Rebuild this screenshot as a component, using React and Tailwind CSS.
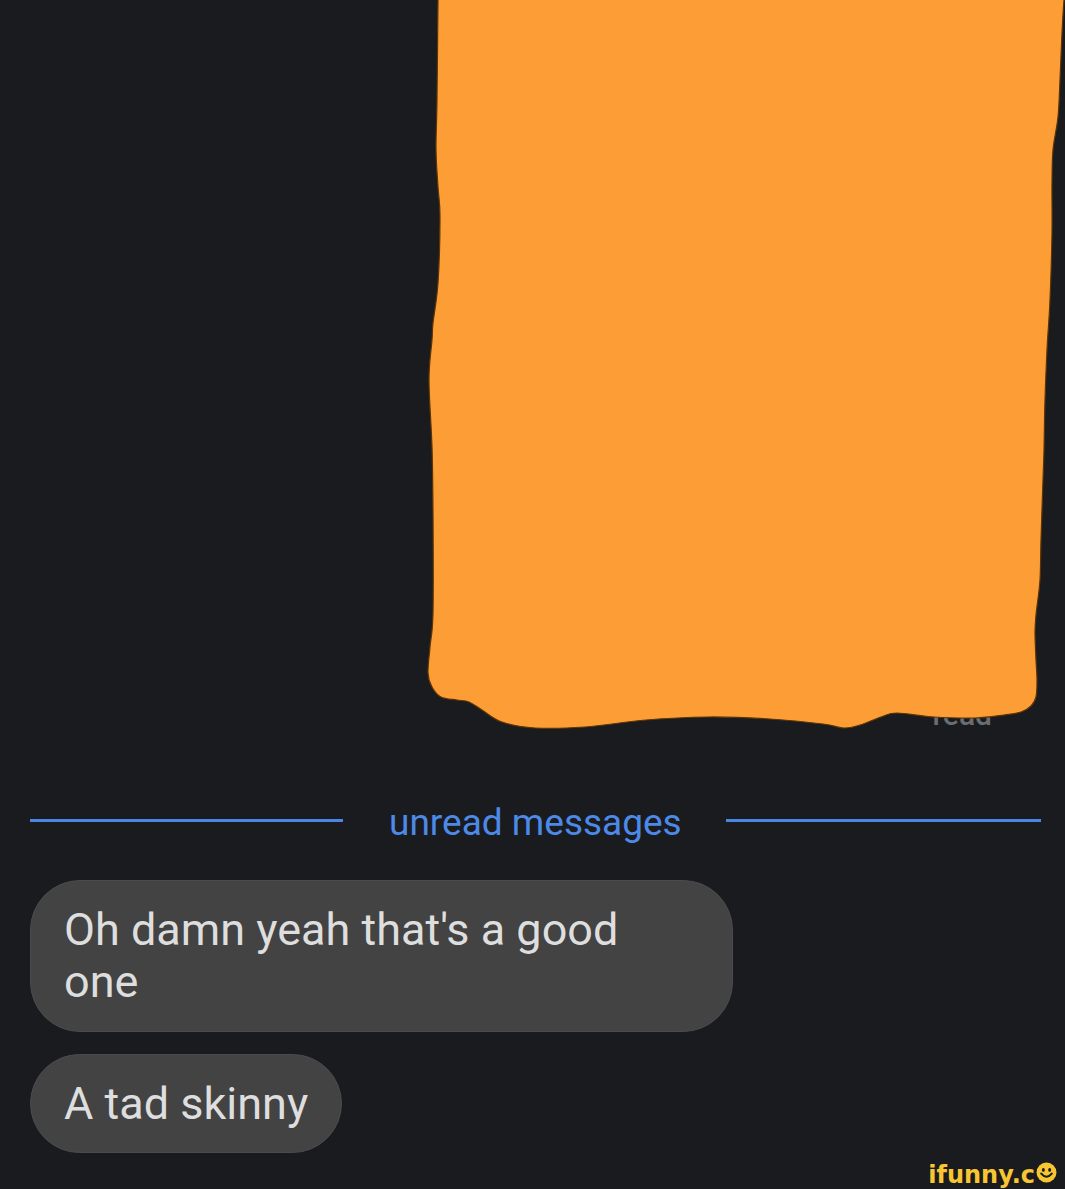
import React from "react";

const pts = [
  [438, -2], [1065, -2], [1064, 0], [1062, 33], [1060, 80], [1058, 117], [1053, 150], [1052, 183],
  [1052, 233], [1050, 300], [1047, 350], [1045, 400], [1044, 450], [1043, 480],
  [1041, 540], [1040, 580], [1036, 615], [1035, 633], [1036, 660], [1037, 680],
  [1036, 697], [1031, 706], [1021, 712], [1004, 715], [975, 718], [934, 717],
  [897, 713], [881, 717], [860, 725], [844, 728], [823, 724], [770, 719],
  [708, 717], [646, 720], [585, 727], [535, 728], [502, 722], [482, 710],
  [469, 702], [457, 700], [441, 697], [432, 687], [428, 673], [430, 647],
  [433, 613], [433, 513], [432, 447], [429, 380], [432, 340], [433, 323],
  [438, 283], [440, 217], [438, 187], [436, 150], [437, 100], [438, 0],
];

function smoothPath(p) {
  const n = p.length;
  let d = `M${p[0][0]},${p[0][1]}`;
  for (let i = 0; i < n; i++) {
    const p0 = p[(i - 1 + n) % n];
    const p1 = p[i];
    const p2 = p[(i + 1) % n];
    const p3 = p[(i + 2) % n];
    const c1x = p1[0] + (p2[0] - p0[0]) / 6;
    const c1y = p1[1] + (p2[1] - p0[1]) / 6;
    const c2x = p2[0] - (p3[0] - p1[0]) / 6;
    const c2y = p2[1] - (p3[1] - p1[1]) / 6;
    d += ` C${c1x.toFixed(1)},${c1y.toFixed(1)} ${c2x.toFixed(1)},${c2y.toFixed(1)} ${p2[0]},${p2[1]}`;
  }
  return d + " Z";
}

const blobD = smoothPath(pts);

function Smiley() {
  return (
    <svg width="21" height="21" viewBox="0 0 20 20" className="mb-[4px] ml-[1px]">
      <circle cx="10" cy="10" r="9.5" fill="#f8c630" />
      <ellipse cx="7" cy="7.5" rx="1.4" ry="1.8" fill="#1a1b1f" />
      <ellipse cx="13" cy="7.5" rx="1.4" ry="1.8" fill="#1a1b1f" />
      <path d="M5 11 Q10 17 15 11" stroke="#1a1b1f" strokeWidth="2" fill="none" strokeLinecap="round" />
    </svg>
  );
}

export default function App() {
  return (
    <div
      className="relative w-full h-[1189px] overflow-hidden bg-[#1a1b1f] flex flex-col"
      style={{ fontFamily: "Roboto, 'Noto Sans', sans-serif" }}
    >
      <div className="flex justify-end pt-[697px] pr-[73px]">
        <span className="text-[30px] leading-[36px] font-medium text-[#6a6d72]">read</span>
      </div>

      <div className="flex items-center mt-[68px] h-[43px] pl-[30px]">
        <div className="w-[313px] h-[3px] bg-[#4a87e2] mb-[4px]" />
        <span className="ml-[46px] text-[37px] leading-[43px] text-[#4d89e6]">unread messages</span>
        <div className="ml-[44px] w-[315px] h-[3px] bg-[#4a87e2] mb-[4px]" />
      </div>

      <div className="mt-[36px] ml-[30px] w-[703px] h-[152px] rounded-[50px] bg-[#434343] border border-[#4a4b4e] pl-[33px] pr-[70px] pt-[23px]">
        <p className="text-[45px] leading-[52px] text-[#dedede]">Oh damn yeah that's a good one</p>
      </div>

      <div className="mt-[22px] ml-[30px] self-start h-[99px] rounded-full bg-[#434343] border border-[#4a4b4e] pl-[33px] pr-[33px] pt-[23px]">
        <p className="text-[45px] leading-[52px] text-[#dedede] whitespace-nowrap">A tad skinny</p>
      </div>

      <svg
        className="absolute top-0 left-0 pointer-events-none"
        width="1065"
        height="740"
        viewBox="0 0 1065 740"
      >
        <path d={blobD} fill="#fd9d36" stroke="#5c3507" strokeWidth="1.2" strokeLinejoin="round" />
      </svg>

      <div className="absolute right-[8px] bottom-[2px] flex items-end">
        <span
          className="text-[24px] leading-[24px] font-bold text-[#f8c630] tracking-[0px]"
          style={{ fontFamily: "'DejaVu Sans', sans-serif" }}
        >
          ifunny.c
        </span>
        <Smiley />
      </div>
    </div>
  );
}
